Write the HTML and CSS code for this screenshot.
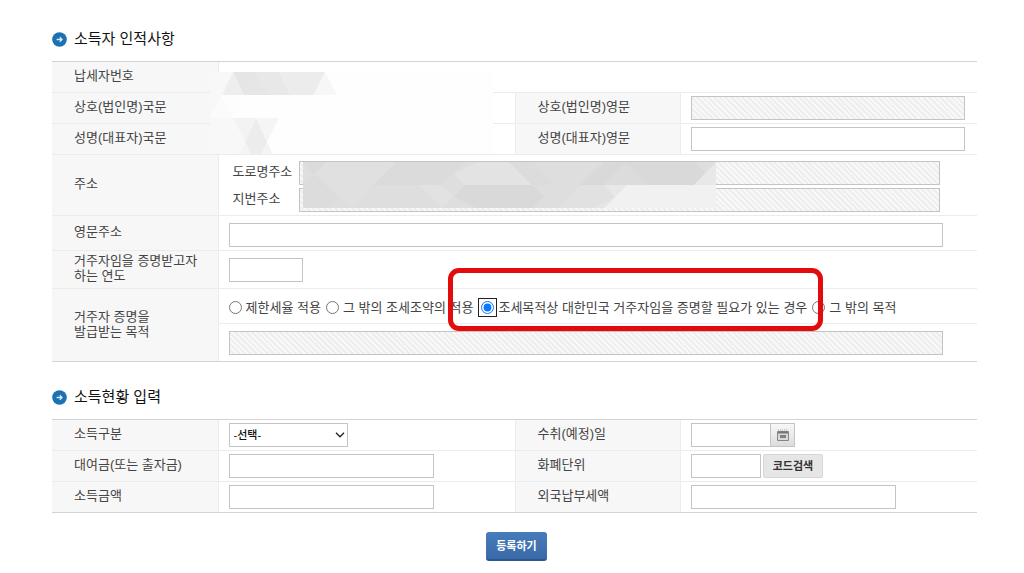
FILE: index.html
```html
<!DOCTYPE html>
<html lang="ko">
<head>
<meta charset="utf-8">
<title>소득자 인적사항</title>
<link rel="stylesheet" href="styles.css">
</head>
<body>
<form class="page">
  <section class="block">
    <h2 class="title">
      <svg class="bullet" viewBox="0 0 15 15" aria-hidden="true"><circle cx="7.5" cy="7.5" r="7.3" fill="#1c71b3"/><path d="M4.6 7.5h5.2M7.8 5.3L10 7.5 7.8 9.7" fill="none" stroke="#d9ecf8" stroke-width="1.3"/></svg>
      소득자 인적사항
    </h2>
    <table class="grid">
      <colgroup><col class="c-label"><col class="c-field"><col class="c-label"><col class="c-field"></colgroup>
      <tr>
        <th scope="row">납세자번호</th>
        <td colspan="3" class="anchor">
          <svg class="mask mask-name" viewBox="0 0 283 82" aria-hidden="true">
            <path fill="#fefefe" d="M9 0H283V82H0V0z"/>
            <path fill="#f8f8f8" d="M0 0H23L12 23H0z"/>
            <path fill="#eee" d="M23 0L12 23H34z"/>
            <path fill="#e5e5e5" d="M23 0H46L58 23H34z"/>
            <path fill="#e8e8e8" d="M46 0H69L81 23H58z"/>
            <path fill="#ececec" d="M69 0H115L104 23H81z"/>
            <path fill="#e6e6e6" d="M46 0L34 23H58z"/>
            <path fill="#f7f7f7" d="M115 0L104 23H127z"/>
            <path fill="#f8f8f8" d="M0 23H12L0 46z"/>
            <path fill="#fbfbfb" d="M12 23L0 46H23z"/>
            <path fill="#fdfdfd" d="M12 23H34L23 46z"/>
            <path fill="#f8f8f8" d="M0 46H23L35 70 29 82H0z"/>
            <path fill="#f3f3f3" d="M23 46H46L35 70z"/>
            <path fill="#f5f5f5" d="M46 46H69L57 70z"/>
            <path fill="#f4f4f4" d="M35 70L29 82H41zM57 70L51 82H63z"/>
            <path fill="#ececec" d="M46 46L57 70 51 82H41L35 70z"/>
          </svg>
        </td>
      </tr>
      <tr>
        <th scope="row">상호(법인명)국문</th>
        <td></td>
        <th scope="row"><label for="corp-en">상호(법인명)영문</label></th>
        <td><input class="box full" id="corp-en" type="text" disabled></td>
      </tr>
      <tr>
        <th scope="row">성명(대표자)국문</th>
        <td></td>
        <th scope="row"><label for="name-en">성명(대표자)영문</label></th>
        <td><input class="box full" id="name-en" type="text"></td>
      </tr>
      <tr class="r-address">
        <th scope="row">주소</th>
        <td colspan="3">
          <div class="addresses">
            <label for="road">도로명주소</label><input class="box" id="road" type="text" disabled>
            <label for="lot">지번주소</label><input class="box" id="lot" type="text" disabled>
            <svg class="mask mask-address" viewBox="0 0 413 46" aria-hidden="true">
              <path fill="#dedede" d="M0 0H413V46H0z"/>
              <path fill="#dbdbdb" d="M0 0H24L11 12zM93 0H162L138 23H70z"/>
              <path fill="#e0e0e0" d="M24 0H93L70 23 47 46 11 12z"/>
              <path fill="#dcdcdc" d="M0 46V23L11 12 35 35 23 46z"/>
              <path fill="#e3e3e3" d="M174 0H206L229 23H161L151 12z"/>
              <path fill="#dcdcdc" d="M206 0H230L252 23H229z"/>
              <path fill="#d9d9d9" d="M300 0H392L403 11 391 23H277z"/>
              <path fill="#dcdcdc" d="M323 0L346 23H300z"/>
              <path fill="#e8e8e8" d="M413 0V23H391z"/>
              <path fill="#e2e2e2" d="M116 23H139L151 35 139 46 127 35z"/>
              <path fill="#d9d9d9" d="M162 23H230L241 35 230 46H173L151 35z"/>
              <path fill="#e1e1e1" d="M277 23H301L324 46H255z"/>
              <path fill="#e8e8e8" d="M301 23H324L312 35z"/>
              <path fill="#f1f1f1" d="M324 23H413V46H301z"/>
              <path fill="#e5e5e5" d="M312 35L301 46H290z"/>
            </svg>
          </div>
        </td>
      </tr>
      <tr class="r-english">
        <th scope="row"><label for="addr-en">영문주소</label></th>
        <td colspan="3"><input class="box wide" id="addr-en" type="text"></td>
      </tr>
      <tr class="r-year">
        <th scope="row"><label for="year">거주자임을 증명받고자<br>하는 연도</label></th>
        <td colspan="3"><input class="box w-year" id="year" type="text"></td>
      </tr>
      <tr class="r-purpose">
        <th scope="row" rowspan="2">거주자 증명을<br>발급받는 목적</th>
        <td colspan="3">
          <div class="choices">
            <label><input type="radio" name="purpose">제한세율 적용</label>
            <label><input type="radio" name="purpose">그 밖의 조세조약의 적용</label>
            <label class="picked"><input type="radio" name="purpose" checked>조세목적상 대한민국 거주자임을 증명할 필요가 있는 경우</label>
            <label><input type="radio" name="purpose">그 밖의 목적</label>
            <span class="highlight"></span>
          </div>
        </td>
      </tr>
      <tr class="r-other">
        <td colspan="3"><input class="box wide" type="text" aria-label="그 밖의 목적" disabled></td>
      </tr>
    </table>
  </section>

  <section class="block">
    <h2 class="title">
      <svg class="bullet" viewBox="0 0 15 15" aria-hidden="true"><circle cx="7.5" cy="7.5" r="7.3" fill="#1c71b3"/><path d="M4.6 7.5h5.2M7.8 5.3L10 7.5 7.8 9.7" fill="none" stroke="#d9ecf8" stroke-width="1.3"/></svg>
      소득현황 입력
    </h2>
    <table class="grid">
      <colgroup><col class="c-label"><col class="c-field"><col class="c-label"><col class="c-field"></colgroup>
      <tr>
        <th scope="row"><label for="kind">소득구분</label></th>
        <td>
          <div class="pick">
            <select class="box" id="kind"><option>-선택-</option></select>
            <svg class="chevron" viewBox="0 0 10 6" aria-hidden="true"><path d="M1 .8l4 4 4-4" fill="none" stroke="#222" stroke-width="1.3"/></svg>
          </div>
        </td>
        <th scope="row"><label for="date">수취(예정)일</label></th>
        <td>
          <div class="joined"><input class="box w-date" id="date" type="text"><button class="calendar" type="button" aria-label="달력">
            <svg viewBox="0 0 12 12" aria-hidden="true"><path d="M1 1h10" stroke="#aaa" stroke-dasharray="1 1"/><path d="M.5 2.5h11v9H.5z" fill="#d8d8d8" stroke="#858585"/><path d="M1 3.5h10" stroke="#777" stroke-width="2"/><path d="M3 7.5h6" stroke="#808080" stroke-width="3"/></svg>
          </button></div>
        </td>
      </tr>
      <tr>
        <th scope="row"><label for="loan">대여금(또는 출자금)</label></th>
        <td><input class="box w-amount" id="loan" type="text"></td>
        <th scope="row"><label for="currency">화폐단위</label></th>
        <td><div class="joined spaced"><input class="box w-code" id="currency" type="text"><button class="search" type="button">코드검색</button></div></td>
      </tr>
      <tr>
        <th scope="row"><label for="income">소득금액</label></th>
        <td><input class="box w-amount" id="income" type="text"></td>
        <th scope="row"><label for="tax">외국납부세액</label></th>
        <td><input class="box w-amount" id="tax" type="text"></td>
      </tr>
    </table>
  </section>

  <div class="actions"><button class="submit" type="submit">등록하기</button></div>
</form>
</body>
</html>
```

FILE: styles.css
```css
* { box-sizing: border-box; }

body {
  margin: 0;
  background: #fff;
  color: #444;
  font-family: "Liberation Sans", "Noto Sans CJK KR", sans-serif;
  font-size: 13px;
  line-height: 15px;
}

.page { padding: 28px 47px 10px 52px; }

.block { margin-bottom: 24px; }

.title {
  display: flex;
  align-items: center;
  gap: 7px;
  margin: 0 0 11px;
  color: #111;
  font-size: 15px;
  font-weight: 400;
  line-height: 22px;
}
.bullet { width: 15px; height: 15px; }

.grid {
  width: 100%;
  table-layout: fixed;
  border-collapse: separate;
  border-spacing: 0;
  border-top: 1px solid #d3d3d3;
  border-bottom: 1px solid #d3d3d3;
}
.c-label { width: 18%; }
.c-field { width: 32%; }

.grid tr { height: 31px; }
.grid tr:last-child { height: 30px; }
.grid th,
.grid td {
  border-bottom: 1px solid #ececec;
  text-align: left;
  vertical-align: middle;
}
.grid th {
  padding: 0 4px 3px 22px;
  border-right: 1px solid #ececec;
  background: #f7f7f7;
  font-weight: 400;
}
.grid td { padding: 2px 12px 2px 10px; }
.grid td + th { border-left: 1px solid #ececec; }
.grid tr:last-child > *,
.grid th[rowspan] { border-bottom: 0; }
.grid .r-address { height: 61px; }
.grid .r-english, .grid .r-purpose { height: 35px; }
.grid .r-year { height: 38px; }
.grid tr.r-other { height: 37px; }
.grid .r-english td { padding-top: 5px; }
.grid .r-purpose th { padding-bottom: 3px; }
.grid .r-other td { padding-top: 3px; }

.box {
  display: block;
  height: 24px;
  padding: 0 4px;
  border: 1px solid #c4c4c4;
  border-radius: 0;
  background: #fff;
  color: #111;
  font: inherit;
}
.box:disabled {
  background: repeating-linear-gradient(45deg, #f8f8f8 0 2px, #eee 2px 4px);
}
.full { width: 100%; }
.wide { width: 97%; }
.w-year { width: 74px; }
.w-date { width: 80px; }
.w-code { width: 70px; }
.w-amount { width: 205px; }

.pick {
  position: relative;
  width: 119px;
}
.pick .box {
  width: 100%;
  appearance: none;
  font-size: 11px;
  font-weight: 500;
}
.chevron {
  position: absolute;
  top: 9px;
  right: 3px;
  width: 10px;
  height: 6px;
  pointer-events: none;
}

.anchor { position: relative; }
.mask { position: absolute; }
.mask-name {
  top: 10px;
  left: -9px;
  width: 283px;
  height: 82px;
}

.addresses {
  position: relative;
  display: grid;
  grid-template-columns: 66px 1fr;
  gap: 3px 0;
  width: 96%;
  margin: 3px 0 0 4px;
}
.addresses label { padding-top: 3px; }
.addresses .box { width: 100%; }
.mask-address {
  top: 1px;
  left: 70px;
  width: 413px;
  height: 46px;
}

.choices {
  position: relative;
  display: flex;
  align-items: center;
  gap: 5px;
  font-family: "Noto Sans CJK KR", sans-serif;
  white-space: nowrap;
}
.choices label {
  display: flex;
  align-items: center;
  gap: 4px;
}
.choices input {
  width: 13px;
  height: 13px;
  margin: 2px 0 0;
  accent-color: #0a78ff;
}
.choices .picked { padding-left: 3px; }
.picked input { outline: 1px solid #222; outline-offset: 2px; }
.highlight {
  position: absolute;
  top: -31px;
  left: 219px;
  width: 375px;
  height: 63px;
  border: 5px solid #e30b0b;
  border-radius: 11px;
}

.joined { display: flex; }
.spaced { gap: 2px; }
.calendar {
  display: flex;
  align-items: center;
  justify-content: center;
  width: 24px;
  padding: 0;
  border: 1px solid #c4c4c4;
  border-left: 0;
  background: linear-gradient(#f8f8f8, #dcdcdc);
}
.calendar svg { width: 12px; height: 12px; }
.search {
  width: 60px;
  padding: 0;
  border: 1px solid #d6d6d6;
  border-radius: 2px;
  background: #e6e6e6;
  color: #333;
  font: bold 11px/18px "Liberation Sans", "Noto Sans CJK KR", sans-serif;
}

.actions {
  display: flex;
  justify-content: center;
  padding-left: 4px;
  margin-top: -5px;
}
.submit {
  height: 29px;
  padding: 0 10px;
  border: 0;
  border-bottom: 2px solid #2b568e;
  border-radius: 3px;
  background: linear-gradient(#477bbb, #3a6aa8);
  color: #fff;
  font: bold 11px/18px "Liberation Sans", "Noto Sans CJK KR", sans-serif;
}
```
